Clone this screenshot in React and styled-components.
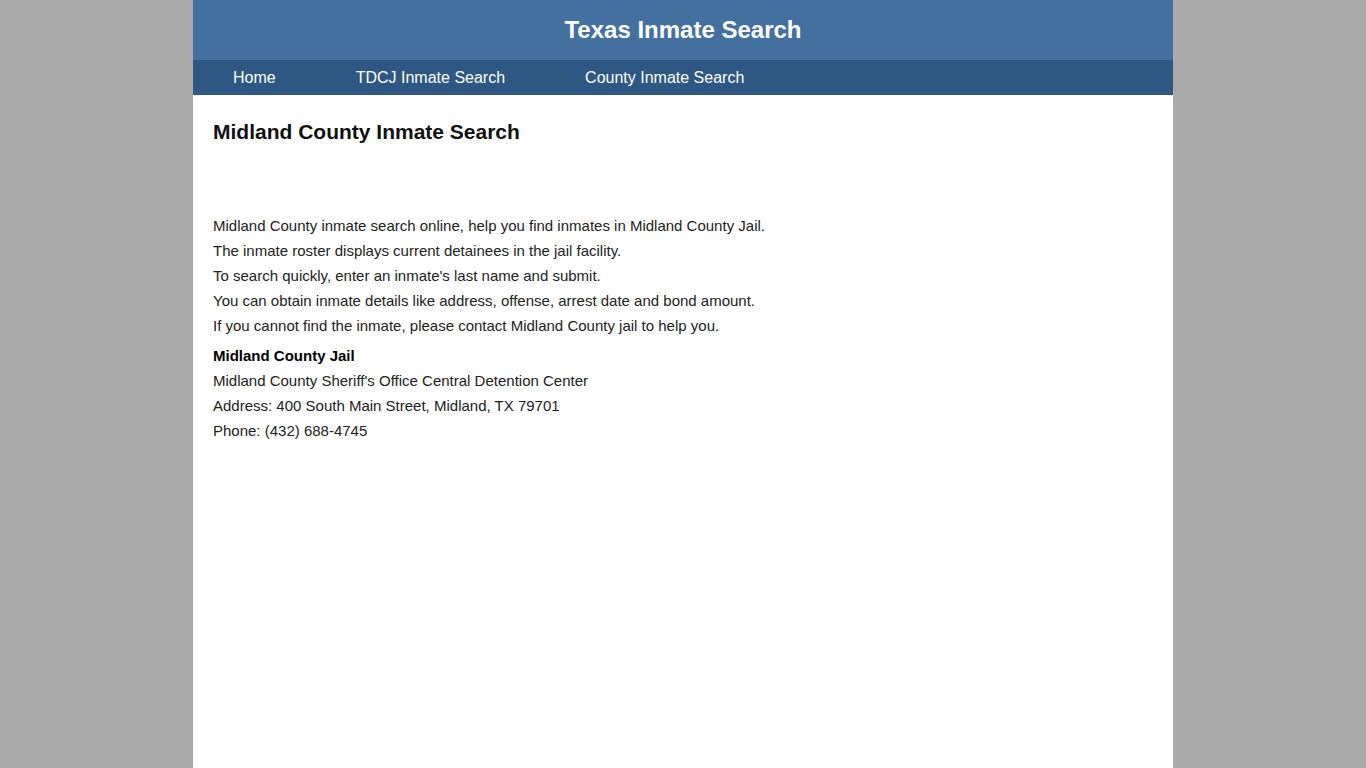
import React from "react";
import styled, { createGlobalStyle } from "styled-components";

const GlobalStyle = createGlobalStyle`
  html, body {
    margin: 0;
    padding: 0;
    background: #aaaaaa;
    font-family: Arial, "Liberation Sans", sans-serif;
  }
`;

const Page = styled.div`
  width: 980px;
  min-height: 768px;
  margin: 0 auto;
  background: #fff;
`;

const Header = styled.header`
  height: 60px;
  background: #4470a0;
  display: flex;
  align-items: center;
  justify-content: center;
`;

const SiteTitle = styled.h1`
  margin: 0;
  color: #fff;
  font-size: 24px;
  font-weight: bold;
`;

const Nav = styled.nav`
  height: 35px;
  background: #2e5883;
  display: flex;
  align-items: center;
`;

const NavLink = styled.a`
  padding: 0 40px;
  color: #fff;
  font-size: 16px;
  text-decoration: none;
  line-height: 35px;
`;

const Content = styled.main`
  padding: 25px 20px 20px;
`;

const Heading = styled.h2`
  margin: 0 0 69px;
  font-size: 21px;
  line-height: 24px;
  color: #111;
`;

const Para = styled.p`
  margin: 0 0 5px;
  font-size: 15px;
  line-height: 25px;
  color: #222;
`;

const Line = styled.span`
  display: block;
  font-weight: ${(p) => (p.$bold ? "bold" : "normal")};
  color: ${(p) => (p.$bold ? "#000" : "#222")};
`;

const intro = [
  "Midland County inmate search online, help you find inmates in Midland County Jail.",
  "The inmate roster displays current detainees in the jail facility.",
  "To search quickly, enter an inmate's last name and submit.",
  "You can obtain inmate details like address, offense, arrest date and bond amount.",
  "If you cannot find the inmate, please contact Midland County jail to help you.",
];

const jail = [
  "Midland County Sheriff's Office Central Detention Center",
  "Address: 400 South Main Street, Midland, TX 79701",
  "Phone: (432) 688-4745",
];

export default function App() {
  return (
    <>
      <GlobalStyle />
      <Page>
        <Header>
          <SiteTitle>Texas Inmate Search</SiteTitle>
        </Header>
        <Nav>
          <NavLink href="#">Home</NavLink>
          <NavLink href="#">TDCJ Inmate Search</NavLink>
          <NavLink href="#">County Inmate Search</NavLink>
        </Nav>
        <Content>
          <Heading>Midland County Inmate Search</Heading>
          <Para>
            {intro.map((t) => (
              <Line key={t}>{t}</Line>
            ))}
          </Para>
          <Para>
            <Line $bold>Midland County Jail</Line>
            {jail.map((t) => (
              <Line key={t}>{t}</Line>
            ))}
          </Para>
        </Content>
      </Page>
    </>
  );
}
